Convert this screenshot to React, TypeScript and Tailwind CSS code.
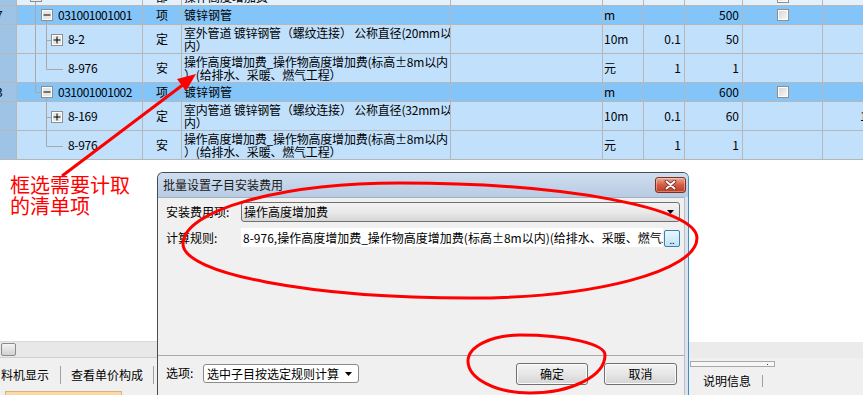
import React from "react";

const FONT = "font-['Noto_Sans_CJK_SC','Noto_Sans',sans-serif]";
const LINE = "#a8a8a8";
const cell = "shrink-0 h-full border-r border-[#b7b7b7]";

type Sub = {
  code: string;
  type: string;
  name: [string, string];
  unit: string;
  qty: string;
  amt: string;
  plus: boolean;
  tail?: string;
};

type Group = { no: string; code: string; amt: string; last: boolean; subs: Sub[] };

const groups: Group[] = [
  {
    no: "7",
    code: "031001001001",
    amt: "500",
    last: false,
    subs: [
      { code: "8-2", type: "定", name: ["室外管道 镀锌钢管（螺纹连接） 公称直径(20mm以", "内）"], unit: "10m", qty: "0.1", amt: "50", plus: true },
      { code: "8-976", type: "安", name: ["操作高度增加费_操作物高度增加费(标高±8m以内", "）(给排水、采暖、燃气工程）"], unit: "元", qty: "1", amt: "1", plus: false },
    ],
  },
  {
    no: "3",
    code: "031001001002",
    amt: "600",
    last: true,
    subs: [
      { code: "8-169", type: "定", name: ["室内管道 镀锌钢管（螺纹连接） 公称直径(32mm以", "内）"], unit: "10m", qty: "0.1", amt: "60", plus: true, tail: "1" },
      { code: "8-976", type: "安", name: ["操作高度增加费_操作物高度增加费(标高±8m以内", "）(给排水、采暖、燃气工程）"], unit: "元", qty: "1", amt: "1", plus: false },
    ],
  },
];

function TreeBox({ x, y, plus }: { x: number; y: number; plus?: boolean }) {
  return (
    <g>
      <rect x={x + 0.5} y={y + 0.5} width={11} height={11} fill="#e6e6e6" stroke="#8e8e8e" />
      <rect x={x + 1.5} y={y + 1.5} width={9} height={9} fill="none" stroke="#ffffff" />
      <line x1={x + 2.5} x2={x + 9.5} y1={y + 6} y2={y + 6} stroke="#000" />
      {plus && <line x1={x + 6} x2={x + 6} y1={y + 2.5} y2={y + 9.5} stroke="#000" />}
    </g>
  );
}

function Check({ className = "" }: { className?: string }) {
  return (
    <div
      className={`w-[12px] h-[12px] shrink-0 border border-[#8e8e8e] bg-linear-to-br from-[#d4d4d4] to-[#fafafa] shadow-[inset_0_0_0_1px_#ffffff] ${className}`}
    />
  );
}

type RowProps = {
  h: string;
  bg: string;
  gutter?: React.ReactNode;
  tree?: React.ReactNode;
  type?: React.ReactNode;
  name?: React.ReactNode;
  unit?: string;
  qty?: string;
  amt?: string;
  check?: React.ReactNode;
  tail?: string;
};

function Row({ h, bg, gutter, tree, type, name, unit, qty, amt, check, tail }: RowProps) {
  return (
    <div className={`flex ${h} ${bg} border-b border-[#b7b7b7] overflow-hidden`}>
      <div className={`w-[17px] ${cell} bg-[#9fc3e5] flex items-center overflow-hidden`}>{gutter}</div>
      <div className={`w-[126px] ${cell} flex items-center overflow-hidden`}>{tree}</div>
      <div className={`w-[39px] ${cell} flex items-center justify-center overflow-hidden`}>{type}</div>
      <div className={`w-[269px] ${cell} overflow-hidden`}>{name}</div>
      <div className={`w-[152px] ${cell}`} />
      <div className={`w-[41px] ${cell} flex items-center pl-px`}>{unit}</div>
      <div className={`w-[41px] ${cell} flex items-center justify-end pr-[3px]`}>{qty}</div>
      <div className={`w-[58px] ${cell} flex items-center justify-end pr-[3px]`}>{amt}</div>
      <div className={`w-[80px] ${cell} flex items-center justify-center`}>{check}</div>
      <div className="flex-1 flex items-center pl-[37px]">{tail}</div>
    </div>
  );
}

function Table() {
  return (
    <div className="flex flex-col shrink-0">
      {/* partly scrolled-off row */}
      <Row
        h="h-[6px]"
        bg="bg-[#e3f1fd]"
        tree={
          <svg width="41" height="5" className="shrink-0 self-start">
            <rect x={13.5} y={-9.5} width={11} height={11} fill="#ececec" stroke="#8e8e8e" />
            <line x1="18.5" x2="18.5" y1="2" y2="5" stroke={LINE} />
          </svg>
        }
        type={<span className="block leading-[12px] -mt-[9px] self-start">部</span>}
        name={<span className="block leading-[12px] -mt-[9px] pl-[2px] whitespace-nowrap">操作高度增加费</span>}
        check={<Check className="self-start -mt-[9px]" />}
      />
      {groups.map((g) => (
        <React.Fragment key={g.code}>
          <Row
            h="h-[19px]"
            bg="bg-[#84c5f9]"
            gutter={<span className="-ml-[4px]">{g.no}</span>}
            tree={
              <>
                <svg width="41" height="18" className="shrink-0">
                  <line x1="18.5" x2="18.5" y1="0" y2={g.last ? 9.5 : 18} stroke={LINE} />
                  {g.last && <line x1="18.5" x2="24" y1="9.5" y2="9.5" stroke={LINE} />}
                  <line x1="29.5" x2="29.5" y1="15" y2="18" stroke={LINE} />
                  <TreeBox x={24} y={3} />
                </svg>
                <span className="tracking-[-0.5px]">{g.code}</span>
              </>
            }
            type="项"
            name={<div className="h-full flex items-center pl-[2px]">镀锌钢管</div>}
            unit="m"
            amt={g.amt}
            check={<Check />}
          />
          {g.subs.map((s, i) => {
            const lastSub = i === g.subs.length - 1;
            return (
              <Row
                key={s.code + i}
                h="h-[29px]"
                bg="bg-[#c1e0fc]"
                tree={
                  <>
                    <svg width="51" height="28" className="shrink-0">
                      {!g.last && <line x1="18.5" x2="18.5" y1="0" y2="28" stroke={LINE} />}
                      <line x1="29.5" x2="29.5" y1="0" y2={lastSub ? 15.5 : 28} stroke={LINE} />
                      {s.plus ? (
                        <>
                          <line x1="29.5" x2="34" y1="15.5" y2="15.5" stroke={LINE} />
                          <TreeBox x={34} y={9} plus />
                        </>
                      ) : (
                        <line x1="29.5" x2="46" y1="15.5" y2="15.5" stroke={LINE} />
                      )}
                    </svg>
                    <span className="tracking-[-0.3px]">{s.code}</span>
                  </>
                }
                type={s.type}
                name={
                  <div className="pl-[2px] pt-px leading-[13px] whitespace-nowrap tracking-[-0.2px]">
                    <div>{s.name[0]}</div>
                    <div>{s.name[1]}</div>
                  </div>
                }
                unit={s.unit}
                qty={s.qty}
                amt={s.amt}
                tail={s.tail}
              />
            );
          })}
        </React.Fragment>
      ))}
    </div>
  );
}

function CloseBtn() {
  return (
    <div className="ml-auto w-[31px] h-[16px] rounded-[3px] border border-[#7d3021] bg-linear-to-b from-[#e9a897] via-[#d35b42] to-[#c0391f] shadow-[inset_0_0_0_1px_rgba(255,255,255,0.35)] flex items-center justify-center">
      <svg width="13" height="10" viewBox="0 0 13 10">
        <path d="M2.5 1.5 L10.5 8.5 M10.5 1.5 L2.5 8.5" stroke="#6b2416" strokeWidth="3.6" strokeLinecap="round" />
        <path d="M2.5 1.5 L10.5 8.5 M10.5 1.5 L2.5 8.5" stroke="#ffffff" strokeWidth="2" strokeLinecap="round" />
      </svg>
    </div>
  );
}

const btn =
  "h-[22px] rounded-[3px] border border-[#707070] bg-linear-to-b from-[#f4f4f4] via-[#e6e6e6] to-[#d4d4d4] shadow-[inset_0_0_0_1px_#fbfbfb] flex items-center justify-center";

function Dialog() {
  return (
    <div className="absolute left-[157px] top-[172px] w-[532px] h-[240px] flex flex-col rounded-t-[6px] border border-[#444c56] border-r-[#3b8fc6] bg-[#c4d6eb] overflow-hidden">
      <div className="h-[24px] shrink-0 flex items-center bg-linear-to-b from-[#cfdeef] to-[#b8cbe3] pl-[5px] pr-[2px]">
        <span className="text-[#1a1a1a]">批量设置子目安装费用</span>
        <CloseBtn />
      </div>
      <div className="flex flex-1">
        <div className="flex-1 flex flex-col bg-[#f0f0f0] border-t border-[#9fb0c4]">
          <div className="h-[157px] pt-[4px] pl-[8px] pr-[4px]">
            <div className="flex items-center h-[20px]">
              <span className="w-[75px] shrink-0">安装费用项:</span>
              <div className="flex-1 h-full rounded-[3px] border border-[#707070] bg-linear-to-b from-[#f3f3f3] via-[#e9e9e9] to-[#d6d6d6] flex items-center pl-[2px] pr-[5px]">
                <span>操作高度增加费</span>
                <svg width="7" height="4" viewBox="0 0 7 4" className="ml-auto">
                  <path d="M0 0 H7 L3.5 4 Z" fill="#000" />
                </svg>
              </div>
            </div>
            <div className="flex items-start h-[19px] mt-[6px]">
              <span className="w-[75px] shrink-0 leading-[19px]">计算规则:</span>
              <div className="w-[422px] h-full bg-white flex items-center pl-[2px] overflow-hidden whitespace-nowrap">
                8-976,操作高度增加费_操作物高度增加费(标高±8m以内)(给排水、采暖、燃气工程)
              </div>
              <div className="w-[16px] h-[17px] mt-[2px] ml-px rounded-[2px] border border-[#3c7fb1] bg-linear-to-b from-[#eaf6fd] to-[#bfe3f6] flex items-end justify-center text-[9px] leading-[11px]">
                ..
              </div>
            </div>
          </div>
          <div className="border-t border-[#a9a9a9] flex items-start pl-[8px]">
            <span className="w-[37px] shrink-0 mt-[9px] leading-[16px]">选项:</span>
            <div className="w-[156px] h-[19px] mt-[8px] rounded-[3px] border border-[#8a8a8a] bg-white flex items-center pl-[3px] pr-[6px]">
              <span>选中子目按选定规则计算</span>
              <svg width="7" height="4" viewBox="0 0 7 4" className="ml-auto">
                <path d="M0 0 H7 L3.5 4 Z" fill="#000" />
              </svg>
            </div>
            <div className={`${btn} w-[72px] mt-[7px] ml-[157px]`}>确定</div>
            <div className={`${btn} w-[73px] mt-[7px] ml-[16px]`}>取消</div>
          </div>
        </div>
        <div className="w-[5px] bg-[#dbe5f1] border-l border-[#bdbdbd]" />
      </div>
    </div>
  );
}

function Annotations() {
  return (
    <>
      <svg className="absolute inset-0 pointer-events-none" width="863" height="395">
        <path
          d="M183 244 C183 210.3 280.2 183 400 183 C564 183 697 207.6 697 238 C697 271.1 595.4 298 470 298 C311.5 298 183 273.8 183 244 Z"
          fill="none"
          stroke="#ff0000"
          strokeWidth="3"
        />
        <path
          d="M468 361 C468 346.6 491.3 335 520 335 C566.9 335 605 344 605 355 C605 376 571.4 393 530 393 C495.8 393 468 378.7 468 361 Z"
          fill="none"
          stroke="#ff0000"
          strokeWidth="3"
        />
        <line x1="62" y1="176" x2="184" y2="84" stroke="#ff0000" strokeWidth="3" />
        <polygon points="196,74 177,79 186,91" fill="#ff0000" />
      </svg>
      <div className="absolute left-[10px] top-[174px] text-[20px] leading-[21px] text-[#ff0000]">
        框选需要计取
        <br />
        的清单项
      </div>
    </>
  );
}

export default function App() {
  return (
    <div className={`relative w-[863px] h-[395px] overflow-hidden bg-white text-[12px] text-black ${FONT} flex flex-col`}>
      <Table />
      <div className="flex flex-1">
        <div className="w-[157px] flex flex-col">
          <div className="flex-1" />
          <div className="h-[16px] bg-[#e8e8e8] border-t border-[#dadada] flex items-center pl-px">
            <div className="w-[15px] h-[13px] rounded-[2px] border border-[#8b8b8b] bg-linear-to-b from-[#f4f4f4] to-[#d0d0d0]" />
          </div>
          <div className="h-[34px] bg-[#f0f0f0] border-t border-[#cfcfcf] flex items-center whitespace-nowrap">
            <span className="pl-px">料机显示</span>
            <span className="ml-[11px] w-px h-[18px] bg-[#a0a0a0]" />
            <span className="ml-[10px]">查看单价构成</span>
            <span className="ml-[10px] w-px h-[18px] bg-[#a0a0a0]" />
          </div>
          <div className="h-[4px] bg-[#f0f0f0] pl-[5px]">
            <div className="w-[117px] h-full bg-[#fbd8a4] border-t border-x border-[#d9b27c]" />
          </div>
        </div>
        <div className="w-[531px]" />
        <div className="flex-1 flex flex-col">
          <div className="flex-1" />
          <div className="h-[16px] bg-[#ebebeb]" />
          <div className="h-[3px] bg-[#f0f0f0]" />
          <div className="h-[6px] bg-[#f0f0f0] pl-[2px]">
            <div className="w-[85px] h-full border border-[#a8a8a8] bg-[#f7f7f7] flex items-center justify-end pr-[6px]">
              <div className="w-px h-px bg-[#1d3f9a]" />
            </div>
          </div>
          <div className="h-[28px] bg-[#f0f0f0] flex items-center pl-[15px] whitespace-nowrap">
            <span>说明信息</span>
            <span className="ml-[11px] w-px h-[12px] bg-[#a0a0a0]" />
          </div>
        </div>
      </div>
      <Dialog />
      <Annotations />
    </div>
  );
}
